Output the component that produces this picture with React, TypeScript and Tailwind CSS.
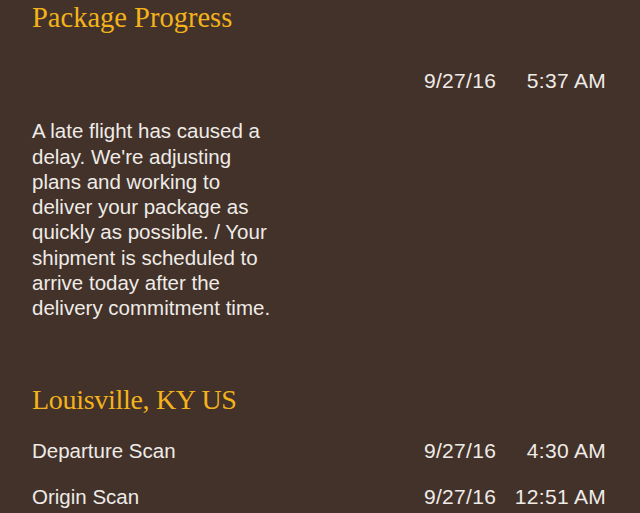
import React from 'react'

const serif = { fontFamily: '"Liberation Serif", "DejaVu Serif", serif' }

interface Scan {
  label: string
  date: string
  time: string
}

const scans: Scan[] = [
  { label: 'Departure Scan', date: '9/27/16', time: '4:30 AM' },
  { label: 'Origin Scan', date: '9/27/16', time: '12:51 AM' },
]

const message = [
  'A late flight has caused a',
  "delay. We're adjusting",
  'plans and working to',
  'deliver your package as',
  'quickly as possible. / Your',
  'shipment is scheduled to',
  'arrive today after the',
  'delivery commitment time.',
]

function DateTime({ date, time }: { date: string; time: string }) {
  return (
    <div className="flex items-center justify-between w-[182px] shrink-0 whitespace-nowrap text-[21px] tracking-[0.3px]">
      <span>{date}</span>
      <span>{time}</span>
    </div>
  )
}

export default function App() {
  return (
    <div
      className="w-[640px] h-[513px] overflow-hidden bg-[#42322a] text-[#efebe7] text-[20.5px] leading-[25.3px] pl-[32px] pr-[34px]"
      style={{ fontFamily: '"Liberation Sans", Arial, sans-serif' }}
    >
      {/* Package progress */}
      <h1 className="text-[28.5px] leading-[36px] text-[#f4b31a]" style={serif}>
        Package Progress
      </h1>

      <div className="flex justify-end mt-[32px]">
        <DateTime date="9/27/16" time="5:37 AM" />
      </div>

      <p className="mt-[25px]">
        {message.map(line => (
          <span key={line} className="block">
            {line}
          </span>
        ))}
      </p>

      {/* Location */}
      <h2 className="text-[28px] leading-[36px] text-[#f4b31a] mt-[61px] tracking-[-0.3px]" style={serif}>
        Louisville, KY US
      </h2>

      <ul className="mt-[20px] flex flex-col gap-[21px]">
        {scans.map(s => (
          <li key={s.label} className="flex items-center justify-between">
            <span>{s.label}</span>
            <DateTime date={s.date} time={s.time} />
          </li>
        ))}
      </ul>
    </div>
  )
}
